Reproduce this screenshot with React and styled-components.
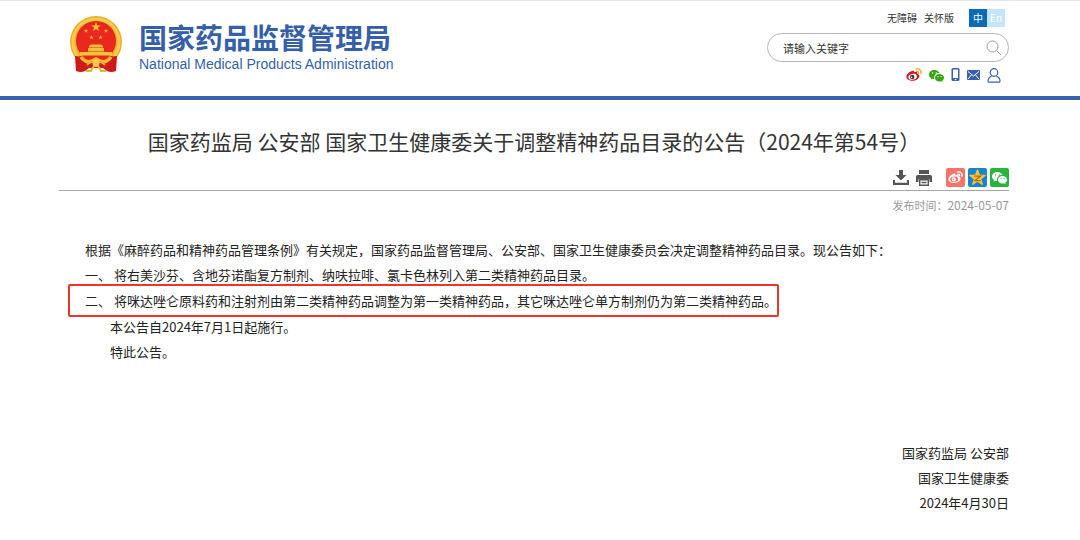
import React, { useState } from "react";
import styled, { createGlobalStyle } from "styled-components";
import { BsWechat } from "react-icons/bs";

const GlobalStyle = createGlobalStyle`
  * {
    box-sizing: border-box;
  }

  body {
    margin: 0;
    background: #fff;
    color: #222;
    font-family: "Noto Sans CJK SC", "Noto Sans", sans-serif;
    font-size: 13px;
  }
`;

const Header = styled.header`
  display: flex;
  justify-content: space-between;
  padding: 8px 71px 13px 69px;
  border-top: 1px solid #e6e6e6;
  border-bottom: 4px solid #3860ae;
`;

const Brand = styled.a`
  display: flex;
  align-items: flex-start;
  gap: 16px;
  padding-top: 6px;
  color: #355fab;
  text-decoration: none;
`;

const Emblem = styled.svg`
  width: 54px;
  height: 58px;
`;

const BrandText = styled.span`
  display: flex;
  flex-direction: column;
  padding-top: 5px;
`;

const BrandName = styled.span`
  font-size: 28px;
  font-weight: 700;
  line-height: 34px;
  white-space: nowrap;
`;

const BrandSub = styled.span`
  font-family: "Liberation Sans", sans-serif;
  font-size: 14px;
  line-height: 20px;
  white-space: nowrap;
`;

const Tools = styled.div`
  display: flex;
  flex-direction: column;
  align-items: flex-end;
`;

const TopLinks = styled.nav`
  display: flex;
  align-items: center;
  padding-right: 4px;
`;

const TopLink = styled.a`
  margin-right: 7px;
  color: #333;
  font-size: 10px;
  line-height: 18px;
  text-decoration: none;
`;

const LangSwitch = styled.div`
  display: flex;
  margin-left: 8px;
`;

const LangButton = styled.button`
  width: 18px;
  height: 18px;
  padding: 0;
  border: 0;
  background: ${(props) => (props.$active ? "#0a6ab6" : "#c5e5fe")};
  color: #fff;
  font-family: inherit;
  font-size: 10px;
  line-height: 18px;
`;

const SearchForm = styled.form`
  display: flex;
  align-items: center;
  width: 242px;
  height: 29px;
  margin-top: 6px;
  padding: 0 6px 0 15px;
  border: 1px solid #b5b5b5;
  border-radius: 15px;
`;

const SearchInput = styled.input`
  flex: 1;
  min-width: 0;
  padding: 0;
  border: 0;
  outline: 0;
  background: transparent;
  font-family: inherit;
  font-size: 11px;

  &::placeholder {
    color: #333;
    opacity: 1;
  }
`;

const IconButton = styled.button`
  display: flex;
  padding: 0;
  border: 0;
  background: none;
  color: #555;
`;

const IconLink = styled.a`
  display: flex;
  color: ${(props) => props.$color || "#3860ae"};
`;

const Social = styled.div`
  display: flex;
  align-items: center;
  gap: 7px;
  height: 16px;
  margin-top: 5px;
  padding-right: 8px;
`;

const Main = styled.main`
  padding: 26px 71px 20px 59px;
`;

const Title = styled.h1`
  margin: 0;
  color: #333;
  font-size: 21px;
  font-weight: 400;
  line-height: 30px;
  text-align: center;
`;

const Actions = styled.div`
  display: flex;
  justify-content: flex-end;
  align-items: center;
  gap: 7px;
  padding: 12px 0 3px;
  border-bottom: 1px solid #a8a8a8;
`;

const Share = styled.div`
  display: flex;
  gap: 3px;
  margin-left: 7px;
`;

const ShareLink = styled.a`
  display: flex;
  align-items: center;
  justify-content: center;
  width: 19px;
  height: 19px;
  border-radius: 2px;
  background: ${(props) => props.$bg};
  color: #fff;
`;

const PublishDate = styled.p`
  margin: 4px 0 0;
  color: #999;
  font-size: 11px;
  line-height: 20px;
  text-align: right;

  time {
    font-size: 12px;
  }
`;

const Article = styled.article`
  padding: 22px 0 0 26px;
`;

const Paragraph = styled.p`
  margin: 0;
  padding-left: ${(props) => (props.$indent ? "25px" : "0")};
  line-height: 25px;
`;

const Marked = styled.p`
  width: fit-content;
  margin: -3px 0 -3px -17px;
  padding: 2px 0 2px 15px;
  border: 2px solid #f0342a;
  border-radius: 2px;
  line-height: 25px;
`;

const Signature = styled.footer`
  margin-top: 76px;
  line-height: 25px;
  text-align: right;

  p {
    margin: 0;
  }
`;

const STAR = "M0-5 1.2-1.6 4.8-1.6 1.9.6 3 4 0 1.9-3 4-1.9.6-4.8-1.6-1.2-1.6Z";

const NationalEmblem = () => (
  <Emblem viewBox="0 0 54 58" aria-hidden="true">
    <circle cx="27" cy="27" r="26" fill="#efae28" />
    <circle cx="27" cy="27" r="23" fill="none" stroke="#f8cb50" strokeWidth="3" />
    <circle cx="27" cy="26" r="20" fill="#e8281d" />
    <g fill="#f6c23b">
      <path d={STAR} transform="translate(27 12)" />
      <path d={STAR} transform="translate(17 16) scale(.45)" />
      <path d={STAR} transform="translate(37 16) scale(.45)" />
      <path d={STAR} transform="translate(22.500 22.500) scale(.45)" />
      <path d={STAR} transform="translate(31.500 22.500) scale(.45)" />
      <path d="M20 32.500v-1.500l2-1.500h10l2 1.500v1.500ZM19 33h16v3.500H19ZM11 37h32v3.500H11Z" />
    </g>
    <path d="M9 41h36l-7 8H16Z" fill="#e8281d" />
    <path
      d="M8 41q2 1 6 4h26q4-3 6-4l2 0-1 15q-5 2-9 0l-4-3H20l-4 3q-4 2-9 0L6 41Z"
      fill="#cf1a17"
    />
    <path
      d="M12 42c5 7 10 5 15 2 5 3 10 5 15-2"
      fill="none"
      stroke="#f5bd36"
      strokeWidth="3.500"
    />
    <path d="M18 50c3-3 6-4 9-4s6 1 9 4M17 56h5l3-5h4l3 5h5" fill="none" stroke="#f0b02c" strokeWidth="2" />
    <circle cx="27" cy="48" r="3.500" fill="#f8cb50" />
  </Emblem>
);

const WeiboIcon = ({ size, body, wave, white, pupil }) => (
  <svg width={size} height={size} viewBox="0 0 16 16" aria-hidden="true">
    <path
      d="M6.600 3.800c1.300-.5 1.900.2 1.500 1.700 2-.8 3.700-.5 3.200 1.300 3 .8 2.400 3.700.5 5.200-2.400 2.100-7.200 2.500-9.800.5C-.2 10.900 0 8.500 2 6.600 3.300 5.300 5.200 4.200 6.600 3.800Z"
      fill={body}
    />
    <ellipse cx="6.600" cy="9.800" rx="4.300" ry="2.900" transform="rotate(-8 6.600 9.800)" fill={white} />
    <circle cx="6.200" cy="10" r="2.200" fill={pupil} />
    <circle cx="5.600" cy="10.400" r=".8" fill={white} />
    <path
      d="M10.300 2c3.200-.6 5.400 1.500 4.500 4.700M10.600 4.400c1.400-.2 2.100.6 1.800 1.900"
      fill="none"
      stroke={wave}
      strokeWidth="1.300"
      strokeLinecap="round"
    />
  </svg>
);

const App = () => {
  const [keyword, setKeyword] = useState("");

  return (
    <>
      <GlobalStyle />
      <Header>
        <Brand href="#">
          <NationalEmblem />
          <BrandText>
            <BrandName>国家药品监督管理局</BrandName>
            <BrandSub>National Medical Products Administration</BrandSub>
          </BrandText>
        </Brand>
        <Tools>
          <TopLinks>
            <TopLink href="#">无障碍</TopLink>
            <TopLink href="#">关怀版</TopLink>
            <LangSwitch>
              <LangButton type="button" $active>
                中
              </LangButton>
              <LangButton type="button">En</LangButton>
            </LangSwitch>
          </TopLinks>
          <SearchForm onSubmit={(e) => e.preventDefault()}>
            <SearchInput
              type="text"
              aria-label="请输入关键字"
              placeholder="请输入关键字"
              value={keyword}
              onChange={(e) => setKeyword(e.target.value)}
            />
            <IconButton type="submit" aria-label="搜索">
              <svg width="16" height="16" viewBox="0 0 16 16" fill="none" stroke="#999">
                <circle cx="6.500" cy="6.500" r="5.500" />
                <path d="m10.500 10.500 4.500 4.500" />
              </svg>
            </IconButton>
          </SearchForm>
          <Social>
            <IconLink href="#" aria-label="微博">
              <WeiboIcon size={16} body="#d8141a" wave="#f2a122" white="#fff" pupil="#333" />
            </IconLink>
            <IconLink href="#" aria-label="微信" $color="#35a60f">
              <BsWechat size={15} />
            </IconLink>
            <IconLink href="#" aria-label="手机">
              <svg width="9" height="14" viewBox="0 0 9 14">
                <rect x=".5" width="8" height="13" rx="1.500" fill="currentColor" />
                <path d="M2 1.500h5v8.500H2Z" fill="#fff" />
                <circle cx="4.500" cy="11.500" r=".8" fill="#fff" />
              </svg>
            </IconLink>
            <IconLink href="#" aria-label="邮箱">
              <svg width="13" height="10" viewBox="0 0 13 10">
                <rect width="13" height="10" rx="1" fill="currentColor" />
                <path
                  d="m1 1.500 5.500 4.500L12 1.500M1 9l3.500-4M12 9 8.500 5"
                  fill="none"
                  stroke="#fff"
                />
              </svg>
            </IconLink>
            <IconLink href="#" aria-label="个人中心">
              <svg width="14" height="15" viewBox="0 0 14 15" fill="none" stroke="currentColor">
                <circle cx="7" cy="4.500" r="3.800" strokeWidth="1.200" />
                <path
                  d="M4.500 8.200C2.200 9 1 10.800 1 13.200q0 1 1 1h10q1 0 1-1c0-2.400-1.200-4.200-3.500-5"
                  strokeWidth="1.200"
                />
              </svg>
            </IconLink>
          </Social>
        </Tools>
      </Header>

      <Main>
        <Title>国家药监局 公安部 国家卫生健康委关于调整精神药品目录的公告（2024年第54号）</Title>
        <Actions>
          <IconButton type="button" aria-label="下载">
            <svg width="16" height="15" viewBox="0 0 16 15" fill="currentColor">
              <path d="M6 0h4v5h3.500L8 10.500 2.500 5H6Z" />
              <path d="M0 10h2v2.700h12V10h2v5H0Z" />
            </svg>
          </IconButton>
          <IconButton type="button" aria-label="打印">
            <svg width="16" height="16" viewBox="0 0 16 16" fill="currentColor">
              <path d="M3 0h10v4H3Z" />
              <path d="M1.500 5h13q1.500 0 1.500 1.500V12h-2.500V9h-11v3H0V6.500Q0 5 1.500 5Z" />
              <path
                d="M3.700 9.700h8.600v5.600H3.700ZM5.500 12.500h5"
                fill="#fff"
                stroke="currentColor"
                strokeWidth="1.400"
              />
            </svg>
          </IconButton>
          <Share>
            <ShareLink href="#" aria-label="分享到微博" $bg="#f4746b">
              <WeiboIcon size={15} body="#fff" wave="#fff" white="#f4746b" pupil="#fff" />
            </ShareLink>
            <ShareLink href="#" aria-label="分享到QQ空间" $bg="#1684cf">
              <svg width="17" height="17" viewBox="-5.500 -5.500 11 10.500">
                <path d={STAR} fill="#fdc42f" stroke="#fdc42f" strokeLinejoin="round" />
                <path d="M-2-1.200h4L-1.600 1.700H2" fill="none" stroke="#b5651d" strokeWidth=".8" />
              </svg>
            </ShareLink>
            <ShareLink href="#" aria-label="分享到微信" $bg="#28b53c">
              <BsWechat size={15} />
            </ShareLink>
          </Share>
        </Actions>
        <PublishDate>
          发布时间：<time dateTime="2024-05-07">2024-05-07</time>
        </PublishDate>

        <Article>
          <Paragraph>
            根据《麻醉药品和精神药品管理条例》有关规定，国家药品监督管理局、公安部、国家卫生健康委员会决定调整精神药品目录。现公告如下：
          </Paragraph>
          <Paragraph>
            一、 将右美沙芬、含地芬诺酯复方制剂、纳呋拉啡、氯卡色林列入第二类精神药品目录。
          </Paragraph>
          <Marked>
            二、 将咪达唑仑原料药和注射剂由第二类精神药品调整为第一类精神药品，其它咪达唑仑单方制剂仍为第二类精神药品。
          </Marked>
          <Paragraph $indent>本公告自2024年7月1日起施行。</Paragraph>
          <Paragraph $indent>特此公告。</Paragraph>
        </Article>

        <Signature>
          <p>国家药监局 公安部</p>
          <p>国家卫生健康委</p>
          <p>2024年4月30日</p>
        </Signature>
      </Main>
    </>
  );
};

export default App;
